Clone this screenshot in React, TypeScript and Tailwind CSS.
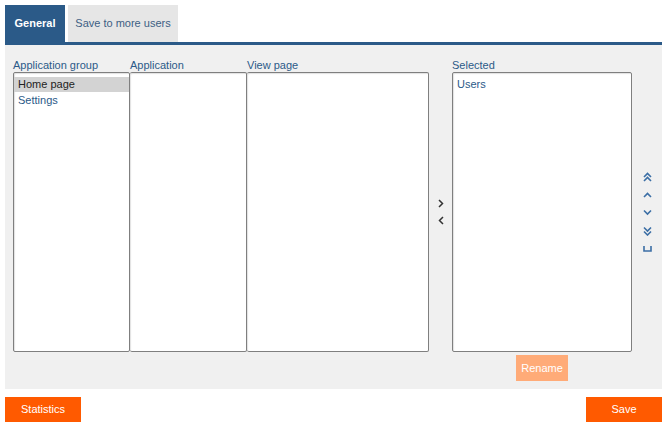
const font = { fontFamily: '"Liberation Sans", Arial, sans-serif' };

function ListBox({ className, children }: { className: string; children?: React.ReactNode }) {
  return (
    <div
      className={`h-[280px] border border-[#7f7f7f] rounded-[2px] bg-white shadow-[inset_1px_1px_1px_rgba(0,0,0,0.12)] ${className}`}
    >
      {children}
    </div>
  );
}

function Chevron({ dir, double }: { dir: "up" | "down"; double?: boolean }) {
  const d = dir === "up" ? "M1 5 L4.5 1.5 L8 5" : "M1 1.5 L4.5 5 L8 1.5";
  return (
    <svg width="9" height={double ? 10 : 7} viewBox={double ? "0 0 9 10" : "0 0 9 7"} fill="none" stroke="#3b6ea5" strokeWidth="1.6">
      <path d={d} />
      {double && <path d={d} transform="translate(0 4)" />}
    </svg>
  );
}

export default function App() {
  return (
    <div className="w-[668px] h-[428px] bg-white p-[5px] text-[11px]" style={font}>
      {/* tabs */}
      <div className="flex gap-[3px] h-[37px]">
        <div className="w-[60px] bg-[#2b5a88] text-white font-bold flex items-center justify-center">
          General
        </div>
        <div className="w-[110px] bg-[#e6e6e6] text-[#3d5f84] flex items-center justify-center">
          Save to more users
        </div>
      </div>
      <div className="h-[3px] w-[657px] bg-[#2b5a88]" />

      {/* panel */}
      <div className="w-[657px] h-[344px] bg-[#f0f0f0] pl-[8px] pt-[14px]">
        <div className="flex items-start">
          <div className="flex flex-col">
            <div className="h-[13px] text-[#2b5a88] leading-[13px]">Application group</div>
            <ListBox className="w-[117px]">
              <div className="mt-[4px] h-[15px] bg-[#d3d3d3] pl-[4px] leading-[15px] text-[#222]">Home page</div>
              <div className="h-[16px] pl-[4px] leading-[16px] text-[#2b5a88]">Settings</div>
            </ListBox>
          </div>
          <div className="flex flex-col">
            <div className="h-[13px] text-[#2b5a88] leading-[13px]">Application</div>
            <ListBox className="w-[117px] border-l-0" />
          </div>
          <div className="flex flex-col">
            <div className="h-[13px] text-[#2b5a88] leading-[13px]">View page</div>
            <ListBox className="w-[182px] border-l-0" />
          </div>
          <div className="w-[23px] h-[293px] pt-[13px] flex flex-col items-center justify-center gap-[8px]">
            <svg width="6" height="9" viewBox="0 0 6 9" fill="none" stroke="#333" strokeWidth="1.5">
              <path d="M1 1 L4.5 4.5 L1 8" />
            </svg>
            <svg width="6" height="9" viewBox="0 0 6 9" fill="none" stroke="#333" strokeWidth="1.5">
              <path d="M5 1 L1.5 4.5 L5 8" />
            </svg>
          </div>
          <div className="flex flex-col items-center">
            <div className="h-[13px] self-start text-[#2b5a88] leading-[13px]">Selected</div>
            <ListBox className="w-[180px]">
              <div className="mt-[4px] h-[15px] pl-[4px] leading-[15px] text-[#2b5a88]">Users</div>
            </ListBox>
            <button className="mt-[3px] w-[52px] h-[26px] bg-[#ffab78] text-white">Rename</button>
          </div>
          <div className="w-[30px] h-[293px] pt-[13px] flex flex-col items-center justify-center gap-[10px]">
            <Chevron dir="up" double />
            <Chevron dir="up" />
            <Chevron dir="down" />
            <Chevron dir="down" double />
            <svg width="9" height="6" viewBox="0 0 9 6" fill="none" stroke="#3b6ea5" strokeWidth="1.6">
              <path d="M1 0 V5 H8 V0" />
            </svg>
          </div>
        </div>
      </div>

      {/* footer */}
      <div className="flex justify-between mt-[8px] w-[657px]">
        <button className="w-[76px] h-[25px] bg-[#ff5a00] text-white">Statistics</button>
        <button className="w-[76px] h-[25px] bg-[#ff5a00] text-white">Save</button>
      </div>
    </div>
  );
}
